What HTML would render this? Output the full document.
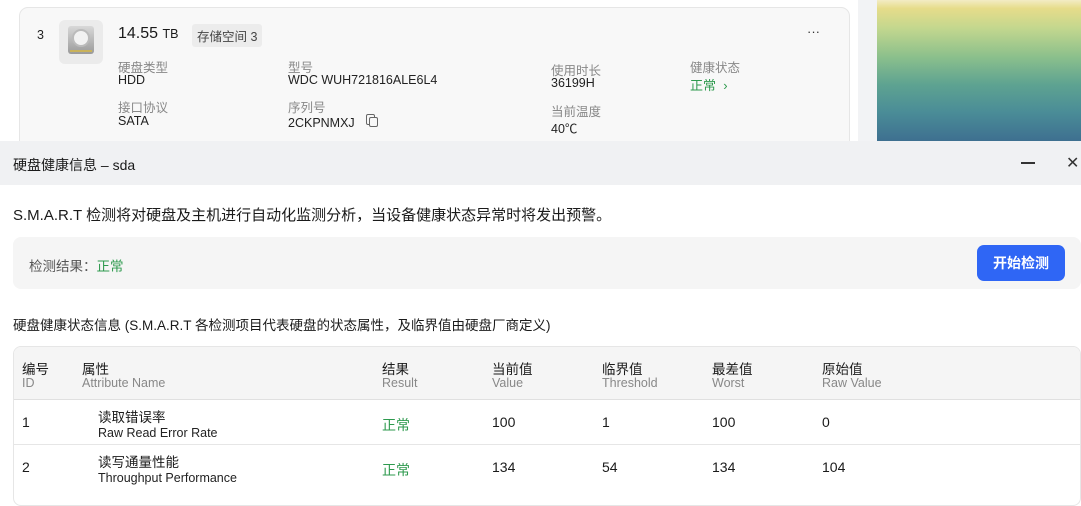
<!DOCTYPE html><html><head><meta charset="utf-8"><style>
*{margin:0;padding:0;box-sizing:border-box}
body{width:1081px;height:486px;overflow:hidden;position:relative;background:#fff;font-family:"Liberation Sans","Noto Sans CJK SC",sans-serif;color:#1a1a1a}
.a{position:absolute;white-space:nowrap}
.g{color:#888;font-size:12.5px}
.v{font-size:12.5px;color:#222}
.grn{color:#2e9a4e}
</style></head><body>
<div class="a" style="left:858px;top:0;width:20px;height:141px;background:#f2f3f5"></div>
<div class="a" style="left:877px;top:0;width:204px;height:141px;background:linear-gradient(180deg,#f3ecc4 0%,#e6dc8a 6%,#c3d78e 20%,#8cc08c 40%,#5ea391 60%,#4a8c97 80%,#3e7090 100%)"></div>
<div class="a" style="left:19px;top:7px;width:831px;height:150px;background:#f8f8f8;border:1px solid #e6e6e6;border-radius:9px"></div>
<div class="a v" style="left:37px;top:28px">3</div>
<div class="a" style="left:59px;top:20px;width:44px;height:44px;background:#ebebeb;border-radius:6px"></div>
<div class="a" style="left:68px;top:26px;width:26px;height:28px;background:linear-gradient(#d8d8d8,#9a9a9a);border-radius:3px"></div>
<div class="a" style="left:72px;top:29px;width:18px;height:18px;border-radius:50%;background:#f2f2f2;border:2px solid #bbb"></div>
<div class="a" style="left:70px;top:50px;width:22px;height:2px;background:#c9b25a"></div>
<div class="a" style="left:118px;top:25px;font-size:16px">14.55 <span style="font-size:12.5px">TB</span></div>
<div class="a" style="left:192px;top:24px;padding:2px 5px;background:#ececec;border-radius:3px;font-size:12.5px;color:#444">存储空间 3</div>
<div class="a g" style="left:118px;top:57px">硬盘类型</div><div class="a v" style="left:118px;top:73px">HDD</div>
<div class="a g" style="left:118px;top:97px">接口协议</div><div class="a v" style="left:118px;top:114px">SATA</div>
<div class="a g" style="left:288px;top:57px">型号</div><div class="a v" style="left:288px;top:73px">WDC WUH721816ALE6L4</div>
<div class="a g" style="left:288px;top:97px">序列号</div><div class="a v" style="left:288px;top:116px">2CKPNMXJ</div>
<div class="a" style="left:366px;top:114px;width:9px;height:11px;border:1px solid #666;border-radius:2px"></div>
<div class="a" style="left:369px;top:117px;width:9px;height:10px;border:1px solid #666;border-radius:2px;background:#f8f8f8"></div>
<div class="a g" style="left:551px;top:60px">使用时长</div><div class="a v" style="left:551px;top:76px">36199H</div>
<div class="a g" style="left:551px;top:101px">当前温度</div><div class="a v" style="left:551px;top:118px">40℃</div>
<div class="a g" style="left:690px;top:57px">健康状态</div><div class="a grn" style="left:690px;top:75px;font-size:13px">正常 &nbsp;›</div>
<div class="a" style="left:807px;top:24px;font-size:13px;color:#333">···</div>
<div class="a" style="left:0;top:141px;width:1081px;height:345px;background:#fff"></div>
<div class="a" style="left:0;top:141px;width:1081px;height:44px;background:#f0f1f3"></div>
<div class="a" style="left:13px;top:155px;font-size:14px">硬盘健康信息 – sda</div>
<div class="a" style="left:1021px;top:162px;width:14px;height:1.5px;background:#333"></div>
<div class="a" style="left:1066px;top:153px;font-size:16px;color:#333">✕</div>
<div class="a" style="left:13px;top:204px;font-size:15px">S.M.A.R.T 检测将对硬盘及主机进行自动化监测分析，当设备健康状态异常时将发出预警。</div>
<div class="a" style="left:13px;top:237px;width:1068px;height:52px;background:#f5f5f5;border-radius:8px"></div>
<div class="a" style="left:29px;top:255px;font-size:13.5px;color:#555">检测结果：<span class="grn">正常</span></div>
<div class="a" style="left:977px;top:245px;width:88px;height:36px;background:#2f66f5;border-radius:7px;color:#fff;font-size:14px;font-weight:bold;text-align:center;line-height:36px">开始检测</div>
<div class="a" style="left:13px;top:314px;font-size:13.5px">硬盘健康状态信息 (S.M.A.R.T 各检测项目代表硬盘的状态属性，及临界值由硬盘厂商定义)</div>
<div class="a" style="left:13px;top:346px;width:1068px;height:160px;border:1px solid #e6e6e6;border-radius:8px;overflow:hidden">
<div style="height:53px;background:#f5f5f5;border-bottom:1px solid #e0e0e0"></div>
<div style="height:45px;border-bottom:1px solid #e6e6e6"></div>
</div>
<div class="a" style="left:22px;top:358px;font-size:13.5px">编号</div><div class="a g" style="left:22px;top:376px">ID</div>
<div class="a" style="left:82px;top:358px;font-size:13.5px">属性</div><div class="a g" style="left:82px;top:376px">Attribute Name</div>
<div class="a" style="left:382px;top:358px;font-size:13.5px">结果</div><div class="a g" style="left:382px;top:376px">Result</div>
<div class="a" style="left:492px;top:358px;font-size:13.5px">当前值</div><div class="a g" style="left:492px;top:376px">Value</div>
<div class="a" style="left:602px;top:358px;font-size:13.5px">临界值</div><div class="a g" style="left:602px;top:376px">Threshold</div>
<div class="a" style="left:712px;top:358px;font-size:13.5px">最差值</div><div class="a g" style="left:712px;top:376px">Worst</div>
<div class="a" style="left:822px;top:358px;font-size:13.5px">原始值</div><div class="a g" style="left:822px;top:376px">Raw Value</div>
<div class="a" style="left:22px;top:414px;font-size:14px">1</div>
<div class="a" style="left:98px;top:406px;font-size:13.5px">读取错误率</div><div class="a v" style="left:98px;top:426px">Raw Read Error Rate</div>
<div class="a grn" style="left:382px;top:415px;font-size:14px">正常</div>
<div class="a" style="left:492px;top:414px;font-size:14px">100</div><div class="a" style="left:602px;top:414px;font-size:14px">1</div><div class="a" style="left:712px;top:414px;font-size:14px">100</div><div class="a" style="left:822px;top:414px;font-size:14px">0</div>
<div class="a" style="left:22px;top:459px;font-size:14px">2</div>
<div class="a" style="left:98px;top:451px;font-size:13.5px">读写通量性能</div><div class="a v" style="left:98px;top:471px">Throughput Performance</div>
<div class="a grn" style="left:382px;top:460px;font-size:14px">正常</div>
<div class="a" style="left:492px;top:459px;font-size:14px">134</div><div class="a" style="left:602px;top:459px;font-size:14px">54</div><div class="a" style="left:712px;top:459px;font-size:14px">134</div><div class="a" style="left:822px;top:459px;font-size:14px">104</div>
</body></html>
